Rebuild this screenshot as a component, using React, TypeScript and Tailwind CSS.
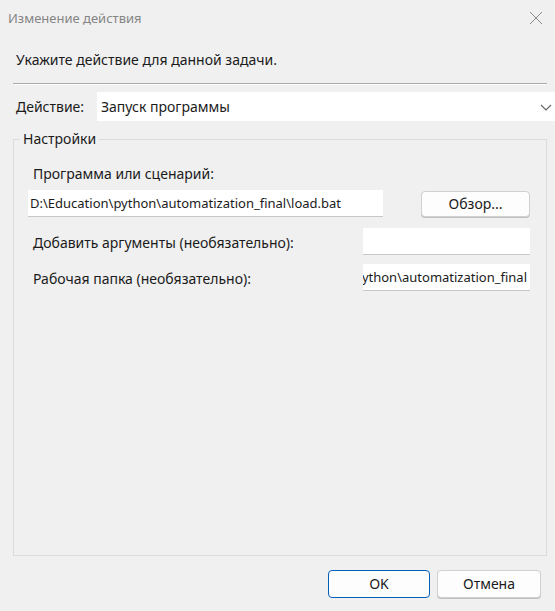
import React from "react";

function Field({value, align}: { value: string, align?: "end" }) {
    return <div
        className={`h-[27px] bg-white border-b border-[#c8c8c8] flex items-center overflow-hidden whitespace-nowrap text-[13px] ${align === "end" ? "justify-end pr-[3px]" : "pl-[2px]"}`}>
        <span className="shrink-0">{value}</span>
    </div>
}

export default function App() {
    return <div
        className="w-[555px] h-[611px] bg-[#f0f0f0] flex flex-col text-[14px] text-[#1b1b1b] font-['Noto_Sans',sans-serif] leading-[20px]">
        <div className="h-[35px] flex items-center justify-between pl-[8px] pr-[12px] text-[13px] text-[#858585]">
            <span>Изменение действия</span>
            <svg width="14" height="14" viewBox="0 0 14 14" className="stroke-[#8a8a8a]">
                <path d="M1 1L13 13M13 1L1 13" strokeWidth="1"/>
            </svg>
        </div>

        <div className="mt-[15px] pl-[16px]">Укажите действие для данной задачи.</div>
        <div className="mt-[13px] ml-[13px] mr-[8px] h-[2px] border-t border-[#a8a8a8] border-b-white border-b"/>

        <div className="mt-[7px] flex items-center">
            <span className="w-[97px] pl-[16px]">Действие:</span>
            <div className="flex-1 h-[29px] bg-white flex items-center justify-between pl-[4px] pr-[2px]">
                <span>Запуск программы</span>
                <svg width="14" height="14" viewBox="0 0 14 14" fill="none" className="stroke-[#666]">
                    <path d="M2 5L7 10L12 5" strokeWidth="1.2"/>
                </svg>
            </div>
        </div>

        <fieldset className="mt-[8px] ml-[13px] mr-[8px] h-[427px] border border-[#dcdcdc]">
            <legend className="ml-[6px] px-[3px]">Настройки</legend>
            <div className="pl-[14px] pr-[16px]">
                <div className="mt-[15px] pl-[5px]">Программа или сценарий:</div>
                <div className="mt-[6px] flex items-center">
                    <div className="w-[355px]">
                        <Field value="D:\Education\python\automatization_final\load.bat"/>
                    </div>
                    <button
                        className="ml-auto w-[109px] h-[26px] bg-[#fdfdfd] border border-[#d0d0d0] rounded-[4px] shadow-[0_1px_0_#c0c0c0]">Обзор...
                    </button>
                </div>
                <div className="mt-[11px] flex items-center">
                    <span className="pl-[5px] pt-[3px]">Добавить аргументы (необязательно):</span>
                    <div className="ml-auto w-[167px]"><Field value=""/></div>
                </div>
                <div className="mt-[9px] flex items-center">
                    <span className="pl-[5px] pt-[3px]">Рабочая папка (необязательно):</span>
                    <div className="ml-auto w-[167px]">
                        <Field value="D:\Education\python\automatization_final" align="end"/>
                    </div>
                </div>
            </div>
        </fieldset>

        <div className="mt-[14px] flex justify-end gap-[7px] pr-[14px]">
            <button className="w-[102px] h-[28px] bg-[#fdfdfd] border border-[#005fb8] rounded-[4px]">OK</button>
            <button
                className="w-[104px] h-[28px] bg-[#fdfdfd] border border-[#d0d0d0] rounded-[4px] shadow-[0_1px_0_#c0c0c0]">Отмена
            </button>
        </div>
    </div>
}
